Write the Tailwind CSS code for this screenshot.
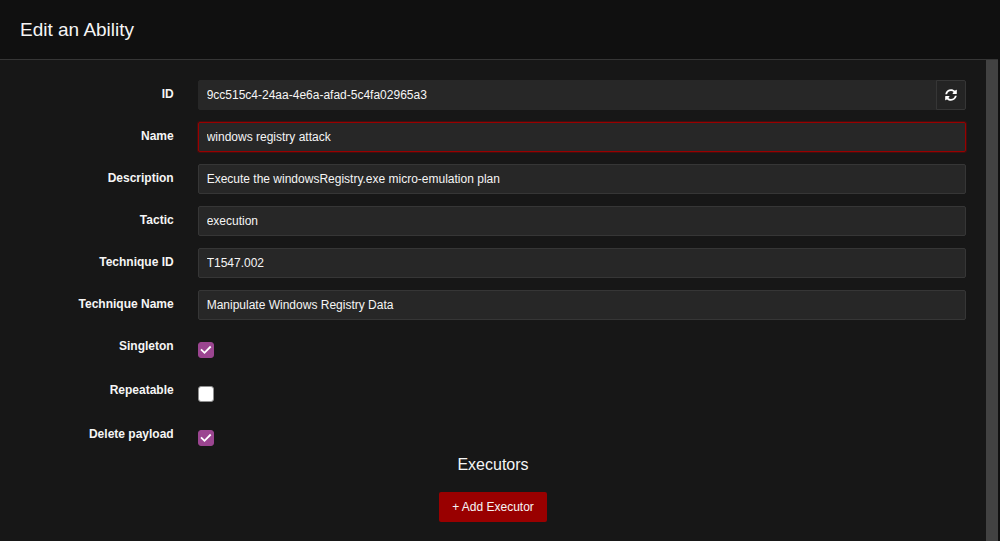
<!DOCTYPE html>
<html lang="en">
<head>
<meta charset="utf-8">
<meta name="viewport" content="width=device-width, initial-scale=1">
<title>Edit an Ability</title>
<script src="https://cdn.jsdelivr.net/npm/@tailwindcss/browser@4"></script>
</head>
<body class="bg-[#101010] font-['Liberation_Sans',Arial,sans-serif] text-xs text-[#f5f5f5]">
<div class="mr-0.5 flex h-screen flex-col overflow-hidden bg-[#171717]">
  <header class="shrink-0 border-b border-[#363636] bg-[#101010] p-5">
    <h1 class="text-[19px] leading-[19px]">Edit an Ability</h1>
  </header>
  <main class="flex min-h-0 grow">
    <form class="min-w-0 grow overflow-hidden p-5">
      <div class="grid grid-cols-[1fr_5fr] gap-x-6 gap-y-3">
        <label for="id" class="pt-1.5 text-right font-bold">ID</label>
        <div class="flex h-[30px]">
          <input id="id" type="text" readonly value="9cc515c4-24aa-4e6a-afad-5c4fa02965a3" class="min-w-0 grow rounded-l-xs border border-[#272727] bg-[#272727] px-2 outline-none">
          <button type="button" aria-label="Generate new ID" class="-ml-px flex w-[30px] items-center justify-center rounded-r-xs border border-[#363636] bg-[#242424] text-white">
            <svg viewBox="0 0 512 512" class="size-3" fill="currentColor" aria-hidden="true"><path d="M370.72 133.28C339.458 104.008 298.888 87.962 255.848 88c-77.458.068-144.328 53.178-162.791 126.85-1.344 5.363-6.122 9.15-11.651 9.15H24.103c-7.498 0-13.194-6.807-11.807-14.176C33.933 94.924 134.813 8 256 8c66.448 0 126.791 26.136 171.315 68.685L463.03 40.97C478.149 25.851 504 36.559 504 57.941V192c0 13.255-10.745 24-24 24H345.941c-21.382 0-32.09-25.851-16.971-40.971l41.75-41.749zM32 296h134.059c21.382 0 32.09 25.851 16.971 40.971l-41.75 41.75c31.262 29.273 71.835 45.319 114.876 45.28 77.418-.07 144.315-53.144 162.787-126.849 1.344-5.363 6.122-9.15 11.651-9.15h57.304c7.498 0 13.194 6.807 11.807 14.176C478.067 417.076 377.187 504 256 504c-66.448 0-126.791-26.136-171.315-68.685L48.97 471.03C33.851 486.149 8 475.441 8 454.059V320c0-13.255 10.745-24 24-24z"/></svg>
          </button>
        </div>
        <label for="name" class="pt-1.5 text-right font-bold">Name</label>
        <input id="name" type="text" value="windows registry attack" class="h-[30px] w-full rounded-xs border border-[#900] bg-[#272727] px-2 shadow-[0_0_0_1px_rgba(153,0,0,0.3)] outline-none">
        <label for="description" class="pt-1.5 text-right font-bold">Description</label>
        <input id="description" type="text" value="Execute the windowsRegistry.exe micro-emulation plan" class="h-[30px] w-full rounded-xs border border-[#363636] bg-[#272727] px-2 outline-none">
        <label for="tactic" class="pt-1.5 text-right font-bold">Tactic</label>
        <input id="tactic" type="text" value="execution" class="h-[30px] w-full rounded-xs border border-[#363636] bg-[#272727] px-2 outline-none">
        <label for="technique-id" class="pt-1.5 text-right font-bold">Technique ID</label>
        <input id="technique-id" type="text" value="T1547.002" class="h-[30px] w-full rounded-xs border border-[#363636] bg-[#272727] px-2 outline-none">
        <label for="technique-name" class="pt-1.5 text-right font-bold">Technique Name</label>
        <input id="technique-name" type="text" value="Manipulate Windows Registry Data" class="h-[30px] w-full rounded-xs border border-[#363636] bg-[#272727] px-2 outline-none">

        <label for="singleton" class="h-8 pt-1.5 text-right font-bold">Singleton</label>
        <div class="grid content-start justify-start pt-2.5">
          <input id="singleton" type="checkbox" checked class="peer col-start-1 row-start-1 size-4 appearance-none rounded-[3px] border border-[#8f8f8f] bg-white checked:border-[#9b4590] checked:bg-[#9b4590]">
          <svg viewBox="0 0 16 16" class="pointer-events-none invisible col-start-1 row-start-1 size-4 peer-checked:visible" fill="none" stroke="#fff" stroke-width="1.8" aria-hidden="true"><path d="M3 7.3 6.5 10.8 12.7 4.5"/></svg>
        </div>
        <label for="repeatable" class="h-8 pt-1.5 text-right font-bold">Repeatable</label>
        <div class="grid content-start justify-start pt-2.5">
          <input id="repeatable" type="checkbox" class="peer col-start-1 row-start-1 size-4 appearance-none rounded-[3px] border border-[#8f8f8f] bg-white checked:border-[#9b4590] checked:bg-[#9b4590]">
          <svg viewBox="0 0 16 16" class="pointer-events-none invisible col-start-1 row-start-1 size-4 peer-checked:visible" fill="none" stroke="#fff" stroke-width="1.8" aria-hidden="true"><path d="M3 7.3 6.5 10.8 12.7 4.5"/></svg>
        </div>
        <label for="delete-payload" class="h-8 pt-1.5 text-right font-bold">Delete payload</label>
        <div class="grid content-start justify-start pt-2.5">
          <input id="delete-payload" type="checkbox" checked class="peer col-start-1 row-start-1 size-4 appearance-none rounded-[3px] border border-[#8f8f8f] bg-white checked:border-[#9b4590] checked:bg-[#9b4590]">
          <svg viewBox="0 0 16 16" class="pointer-events-none invisible col-start-1 row-start-1 size-4 peer-checked:visible" fill="none" stroke="#fff" stroke-width="1.8" aria-hidden="true"><path d="M3 7.3 6.5 10.8 12.7 4.5"/></svg>
        </div>
      </div>
      <h2 class="mb-3.5 text-center text-base leading-[26px]">Executors</h2>
      <div class="flex justify-center">
        <button type="button" class="h-[30px] rounded-xs bg-[#900] px-[13px]">+ Add Executor</button>
      </div>
    </form>
    <div class="w-3 shrink-0 bg-[#424242]"></div>
  </main>
</div>
</body>
</html>
